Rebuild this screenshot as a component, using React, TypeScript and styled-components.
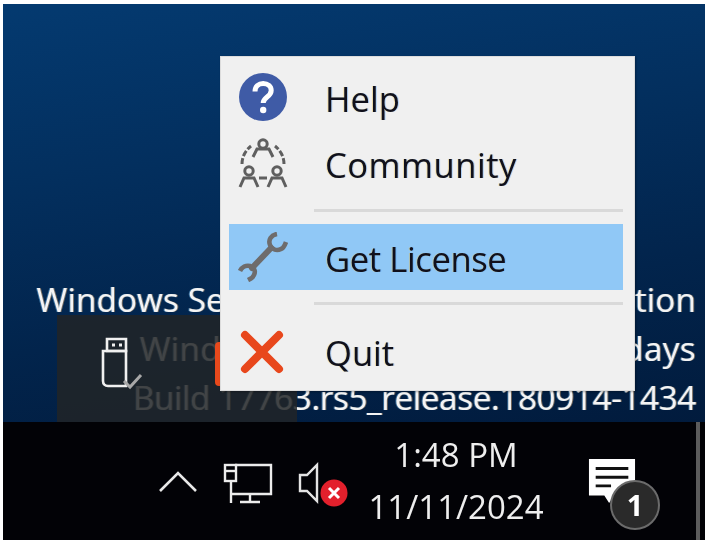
import React from "react";
import styled, { createGlobalStyle } from "styled-components";

const GlobalStyle = createGlobalStyle`
  html, body {
    margin: 0;
    padding: 0;
    background: #fff;
  }
`;

const Page = styled.div`
  width: 709px;
  height: 546px;
  padding: 4px 4px 6px 3px;
  box-sizing: border-box;
  font-family: "Open Sans", "Noto Sans", sans-serif;
  overflow: hidden;
`;

const Screen = styled.div`
  position: relative;
  width: 100%;
  height: 100%;
  display: flex;
  flex-direction: column;
  overflow: hidden;
  filter: blur(0.7px);
`;

const Desktop = styled.div`
  flex: 1;
  display: flex;
  flex-direction: column;
  justify-content: flex-end;
  align-items: flex-end;
  padding: 0 9px 0 0;
  background: linear-gradient(172deg, #043a70 0%, #032f5e 35%, #02244c 68%, #011b3d 100%);
`;

const Watermark = styled.div`
  display: flex;
  flex-direction: column;
  align-items: flex-end;
  color: #f4f4f4;
  font-size: 33.3px;
  line-height: 49px;
  white-space: nowrap;
  text-shadow: -1px 0 rgba(120, 200, 255, 0.45), 1px 0 rgba(255, 190, 120, 0.45);
`;

const WatermarkLine = styled.span<{ $track: number }>`
  letter-spacing: ${(p) => p.$track}px;
`;

const Toast = styled.div`
  position: absolute;
  left: 54px;
  top: 311px;
  width: 240px;
  height: 107px;
  background: rgba(33, 36, 39, 0.85);
`;

const UsbMark = styled.svg`
  position: absolute;
  left: 97px;
  top: 333px;
`;

const OrangeStripe = styled.div`
  position: absolute;
  left: 212px;
  top: 338px;
  width: 10px;
  height: 44px;
  background: #e8491c;
  border-radius: 4px 0 0 4px;
`;

const Menu = styled.div`
  position: absolute;
  left: 217px;
  top: 52px;
  width: 415px;
  height: 335px;
  box-sizing: border-box;
  padding: 7px 11px 0 8px;
  display: flex;
  flex-direction: column;
  background: #f0f0f0;
  border: 1px solid #dcdcdc;
  box-shadow: 1px 1px 2px rgba(0, 0, 0, 0.3);
  color: #10101c;
  font-size: 34.6px;
`;

const MenuRow = styled.div<{ $active?: boolean }>`
  height: 66px;
  display: flex;
  align-items: center;
  background: ${(p) => (p.$active ? "#90c8f6" : "transparent")};
`;

const MenuLabel = styled.span<{ $track?: number }>`
  padding-top: 3px;
  letter-spacing: ${(p) => p.$track ?? 0}px;
  text-shadow: -1px 0 rgba(255, 200, 60, 0.35), 1px 0 rgba(60, 150, 255, 0.35);
`;

const IconCell = styled.div`
  width: 96px;
  display: flex;
  justify-content: flex-start;
  padding-left: 9px;
  box-sizing: border-box;
`;

const Separator = styled.div<{ $mt: number; $mb: number }>`
  height: 3px;
  margin: ${(p) => p.$mt}px 0 ${(p) => p.$mb}px 85px;
  background: #d9d9d9;
`;

const Taskbar = styled.div`
  height: 118px;
  flex-shrink: 0;
  display: flex;
  align-items: center;
  background: #020206;
  color: #eeeeee;
`;

const Tray = styled.div`
  margin-left: 155px;
  display: flex;
  align-items: center;
  gap: 25px;
`;

const Clock = styled.div`
  margin-left: 19px;
  width: 174px;
  display: flex;
  flex-direction: column;
  align-items: center;
  font-size: 33px;
  line-height: 52px;
`;

const Notify = styled.div`
  position: relative;
  margin-left: 45px;
  margin-top: 28px;
  width: 74px;
  height: 74px;
`;

const Badge = styled.div`
  position: absolute;
  left: 22px;
  top: 22px;
  width: 50px;
  height: 50px;
  box-sizing: border-box;
  border-radius: 50%;
  border: 2px solid #6b6b6b;
  background: #2a2a2a;
  color: #fff;
  font-weight: 700;
  font-size: 29px;
  line-height: 46px;
  text-align: center;
`;

const Divider = styled.div`
  align-self: stretch;
  width: 4px;
  margin-left: auto;
  margin-right: 5px;
  background: #5c5c5c;
`;

function HelpIcon() {
  return (
    <svg width="50" height="50" viewBox="0 0 50 50">
      <circle cx="25" cy="25" r="24" fill="#3f5ba6" />
      <path d="M17 19.5c0-5 3.6-8 8.2-8s8 2.8 8 7c0 6.5-8 6.5-8 12.5" fill="none" stroke="#fff" strokeWidth="5" />
      <circle cx="25.2" cy="38" r="3.2" fill="#fff" />
    </svg>
  );
}

function CommunityIcon() {
  return (
    <svg width="50" height="50" viewBox="0 0 50 50" fill="none" stroke="#5f5f5f" strokeWidth="3">
      <circle cx="25" cy="6" r="4.2" />
      <path d="M15 19L19 11H31L35 19" />
      <path d="M4 26C4 18 8 12 13 8M46 26C46 18 42 12 37 8" strokeDasharray="6 2" />
      <circle cx="11" cy="33" r="4.2" />
      <path d="M2 49L6 40H16L20 49" />
      <circle cx="39" cy="33" r="4.2" />
      <path d="M30 49L34 40H44L48 49" />
      <path d="M21 40h8" />
    </svg>
  );
}

function WrenchIcon() {
  return (
    <svg width="50" height="50" viewBox="0 0 50 50" fill="none" stroke="#6e6c6c">
      <path d="M14 36L33 16" strokeWidth="6" strokeLinecap="round" />
      <path d="M39 2c-6 1-9 6-7 11 2 5 7 6 11 4 3-1 4-4 5-7" strokeWidth="4.6" />
      <path d="M2 39c2-4 6-6 10-5 4 1 6 5 4 9-1 3-4 4-6 5" strokeWidth="4.6" />
    </svg>
  );
}

function QuitIcon() {
  return (
    <svg width="50" height="50" viewBox="0 -2 50 50" stroke="#e8471c" strokeWidth="8" strokeLinecap="round">
      <path d="M7 7L41 41M41 7L7 41" />
    </svg>
  );
}

function ChevronIcon() {
  return (
    <svg width="40" height="24" viewBox="0 0 40 24" fill="none" stroke="#e8e8e8" strokeWidth="2.6">
      <path d="M2 22L20 4L38 22" />
    </svg>
  );
}

function NetworkIcon() {
  return (
    <svg width="50" height="48" viewBox="0 -6 50 48" fill="none" stroke="#ececec" strokeWidth="2.4">
      <path d="M12 2H48V31H8" />
      <rect x="2" y="2" width="11" height="16" />
      <path d="M3 8h9" />
      <path d="M8 18V40" />
      <path d="M27 31V39M17 39H37" />
    </svg>
  );
}

function SpeakerIcon() {
  return (
    <svg width="52" height="52" viewBox="0 -8 52 52">
      <path d="M2 12H9L19 2V38L9 28H2Z" fill="none" stroke="#e4e4e4" strokeWidth="2.4" />
      <circle cx="36" cy="30" r="13.5" fill="#e3202c" />
      <path d="M31 25L41 35M41 25L31 35" stroke="#fff" strokeWidth="3" />
    </svg>
  );
}

function BubbleIcon() {
  return (
    <svg width="48" height="48" viewBox="0 0 50 50">
      <path d="M1 1H49V41H26L22 47L17 39H1Z" fill="#fff" />
      <path d="M8 11H42M8 20H42M8 29H24" stroke="#111" strokeWidth="3" />
    </svg>
  );
}

export default function App() {
  return (
    <Page>
      <GlobalStyle />
      <Screen>
        <Desktop>
          <Watermark>
            <WatermarkLine $track={0.1}>Windows Server 2019 Standard Evaluation</WatermarkLine>
            <WatermarkLine $track={0.3}>Windows License valid for 180 days</WatermarkLine>
            <WatermarkLine $track={-0.4}>Build 17763.rs5_release.180914-1434</WatermarkLine>
          </Watermark>
        </Desktop>
        <Taskbar>
          <Tray>
            <ChevronIcon />
            <NetworkIcon />
            <SpeakerIcon />
          </Tray>
          <Clock>
            <span>1:48 PM</span>
            <span>11/11/2024</span>
          </Clock>
          <Notify>
            <BubbleIcon />
            <Badge>1</Badge>
          </Notify>
          <Divider />
        </Taskbar>
        <Toast />
        <UsbMark width="46" height="54" viewBox="0 0 46 54" fill="none" stroke="#f0f0f0" strokeWidth="2.6">
          <path d="M7 2H26V14H7Z" />
          <path d="M3 14H26V49H8C5 49 3 47 3 44Z" />
          <path d="M12 8h3M19 8h3" strokeWidth="3" />
          <path d="M24 44L30 50L41 38" stroke="#a8a8a8" strokeWidth="3" />
        </UsbMark>
        <OrangeStripe />
        <Menu>
          <MenuRow>
            <IconCell><HelpIcon /></IconCell>
            <MenuLabel>Help</MenuLabel>
          </MenuRow>
          <MenuRow>
            <IconCell><CommunityIcon /></IconCell>
            <MenuLabel $track={0.5}>Community</MenuLabel>
          </MenuRow>
          <Separator $mt={13} $mb={12} />
          <MenuRow $active>
            <IconCell><WrenchIcon /></IconCell>
            <MenuLabel $track={-0.4}>Get License</MenuLabel>
          </MenuRow>
          <Separator $mt={12} $mb={13} />
          <MenuRow>
            <IconCell><QuitIcon /></IconCell>
            <MenuLabel>Quit</MenuLabel>
          </MenuRow>
        </Menu>
      </Screen>
    </Page>
  );
}
